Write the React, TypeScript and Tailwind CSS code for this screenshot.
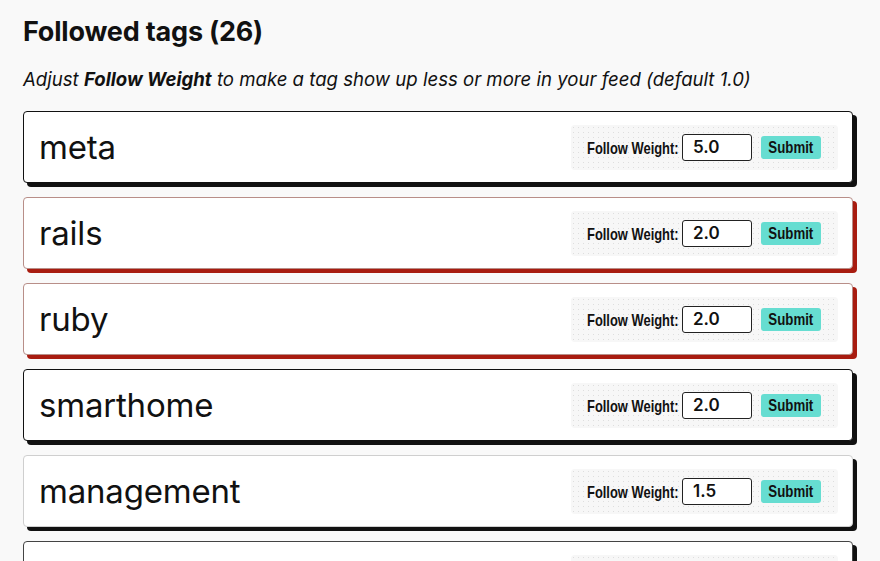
import React from "react";

type Tag = { name: string; weight: string; border: string; shadow: string };

const tags: Tag[] = [
  { name: "meta", weight: "5.0", border: "border-[#111111]", shadow: "shadow-[4px_4px_0_#111111]" },
  { name: "rails", weight: "2.0", border: "border-[#b88e88]", shadow: "shadow-[4px_4px_0_#a81c10]" },
  { name: "ruby", weight: "2.0", border: "border-[#b88e88]", shadow: "shadow-[4px_4px_0_#a81c10]" },
  { name: "smarthome", weight: "2.0", border: "border-[#111111]", shadow: "shadow-[4px_4px_0_#111111]" },
  { name: "management", weight: "1.5", border: "border-[#cfcfcf]", shadow: "shadow-[4px_4px_0_#111111]" },
  { name: "productivity", weight: "1.5", border: "border-[#444444]", shadow: "shadow-[4px_4px_0_#111111]" },
];

function Card({ t }: { t: Tag }) {
  return (
    <div
      className={`flex h-[72px] items-center justify-between rounded-[4px] border bg-white pl-[15px] pr-[14px] ${t.border} ${t.shadow}`}
    >
      <span className="text-[33px] font-normal leading-none text-[#111] [font-family:Inter,sans-serif] tracking-[-0.2px]">
        {t.name}
      </span>
      <div className="flex h-[45px] items-center rounded-[4px] bg-[#f7f7f7] bg-[radial-gradient(#dedede_0.8px,transparent_0.9px)] bg-[length:5px_5px] pl-[16px] pr-[17px]">
        <span className="inline-block w-[90px] translate-y-[2px] overflow-visible whitespace-nowrap">
          <span className="inline-block origin-left scale-x-[0.76] text-[17px] font-bold text-[#111] [font-family:'Liberation_Sans',Arial,sans-serif]">
            Follow Weight:
          </span>
        </span>
        <div className="ml-[5px] flex h-[27px] w-[70px] items-center rounded-[3px] border border-[#222] bg-white pl-[10px] pt-[1px] text-[17px] font-semibold text-[#111] [font-family:Inter,sans-serif]">
          {t.weight}
        </div>
        <div className="ml-[9px] flex h-[23px] w-[60px] items-center justify-center rounded-[3px] bg-[#66ddd1] text-[#111]">
          <span className="inline-block translate-y-[1px] scale-x-[0.78] whitespace-nowrap text-[17px] font-bold [font-family:'Liberation_Sans',Arial,sans-serif]">
            Submit
          </span>
        </div>
      </div>
    </div>
  );
}

export default function App() {
  return (
    <div className="min-h-[561px] bg-[#f9f9f9] pl-[23px] pr-[27px] pt-[14px] [font-family:Inter,sans-serif] text-[#111]">
      <h1 className="text-[27px] font-bold leading-[36px] tracking-[-0.2px]">Followed tags (26)</h1>
      <p className="mt-[16px] text-[18.6px] italic leading-[26px]">
        Adjust <b>Follow Weight</b> to make a tag show up less or more in your feed (default 1.0)
      </p>
      <div className="mt-[19px] flex flex-col gap-[14px]">
        {tags.map((t) => (
          <Card key={t.name} t={t} />
        ))}
      </div>
    </div>
  );
}
